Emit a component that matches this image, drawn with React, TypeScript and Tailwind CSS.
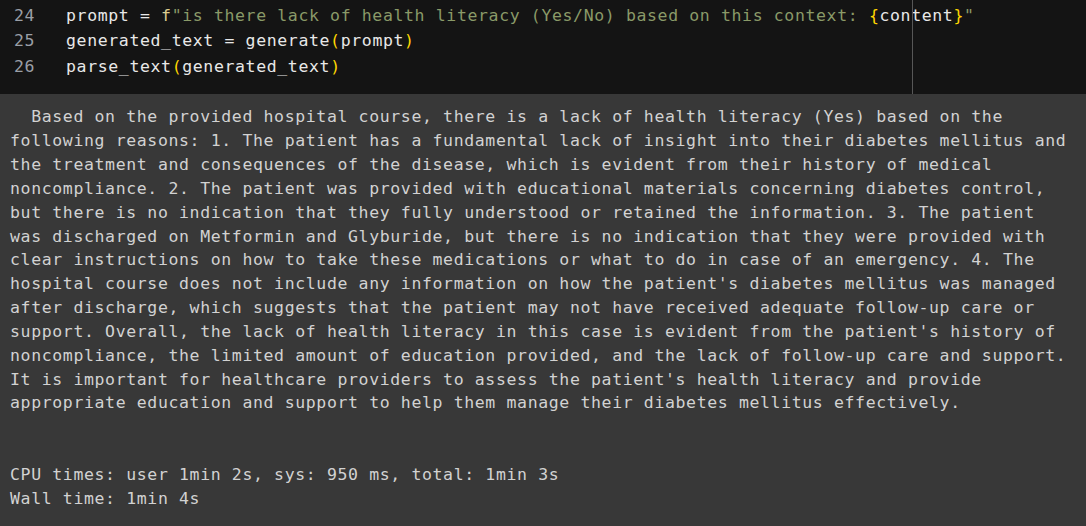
const OUTPUT_LINES = [
  "  Based on the provided hospital course, there is a lack of health literacy (Yes) based on the",
  "following reasons: 1. The patient has a fundamental lack of insight into their diabetes mellitus and",
  "the treatment and consequences of the disease, which is evident from their history of medical",
  "noncompliance. 2. The patient was provided with educational materials concerning diabetes control,",
  "but there is no indication that they fully understood or retained the information. 3. The patient",
  "was discharged on Metformin and Glyburide, but there is no indication that they were provided with",
  "clear instructions on how to take these medications or what to do in case of an emergency. 4. The",
  "hospital course does not include any information on how the patient's diabetes mellitus was managed",
  "after discharge, which suggests that the patient may not have received adequate follow-up care or",
  "support. Overall, the lack of health literacy in this case is evident from the patient's history of",
  "noncompliance, the limited amount of education provided, and the lack of follow-up care and support.",
  "It is important for healthcare providers to assess the patient's health literacy and provide",
  "appropriate education and support to help them manage their diabetes mellitus effectively.",
  "",
  "",
  "CPU times: user 1min 2s, sys: 950 ms, total: 1min 3s",
  "Wall time: 1min 4s",
];

function CodeLine({ n, children }: { n: number; children: React.ReactNode }) {
  return (
    <div className="flex h-[25.7px] leading-[25.7px]">
      <span className="w-[66px] shrink-0 pl-[14px] text-[#9a9fa6]">{n}</span>
      <span className="whitespace-pre text-[#e8e8e8]">{children}</span>
    </div>
  );
}

export default function App() {
  return (
    <div className="min-h-screen w-full bg-[#383838] font-['DejaVu_Sans_Mono',monospace] text-[16.5px] tracking-[0.63px]">
      <div className="relative h-[94px] bg-[#141414] pt-[2.5px]">
        <CodeLine n={24}>
          prompt = <span className="text-[#dccd8f]">f</span>
          <span className="text-[#8a9a68]">"is there lack of health literacy (Yes/No) based on this context: </span>
          <span className="text-[#ffd700]">{"{"}</span>
          content
          <span className="text-[#ffd700]">{"}"}</span>
          <span className="text-[#8a9a68]">"</span>
        </CodeLine>
        <CodeLine n={25}>
          generated_text = generate<span className="text-[#ffd700]">(</span>prompt
          <span className="text-[#ffd700]">)</span>
        </CodeLine>
        <CodeLine n={26}>
          parse_text<span className="text-[#ffd700]">(</span>generated_text
          <span className="text-[#ffd700]">)</span>
        </CodeLine>
        <div className="absolute left-[912px] top-0 h-full w-px bg-[#575757]" />
      </div>
      <div className="pl-[10px] pt-[11.4px] text-[#d2d2d2]">
        {OUTPUT_LINES.map((line, i) => (
          <div key={i} className="h-[23.83px] whitespace-pre leading-[23.83px]">
            {line}
          </div>
        ))}
      </div>
    </div>
  );
}
